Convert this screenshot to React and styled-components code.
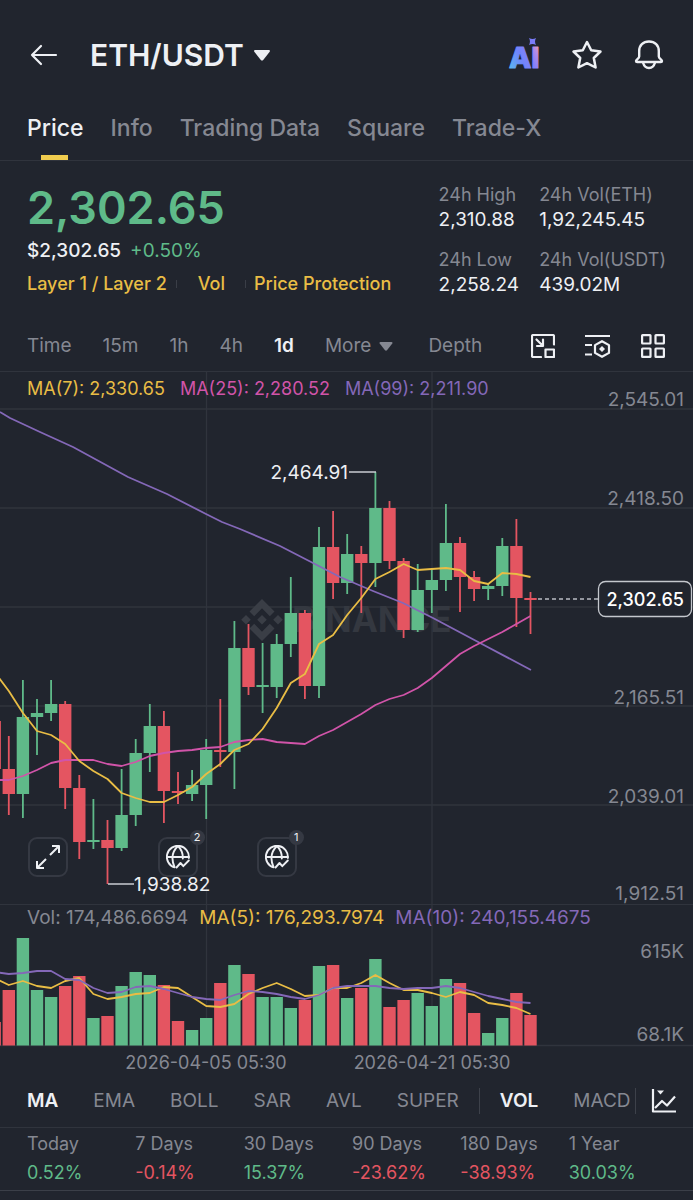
import React, { useState } from "react";
import styled, { createGlobalStyle } from "styled-components";

const GREEN = "#5fba89";
const RED = "#e45561";
const YELLOW = "#e9bd45";
const PINK = "#d154a9";
const PURPLE = "#8468b8";
const GREY = "#858892";
const LIGHT = "#eef0f4";
const LINE = "#30343d";
const BG = "#21252e";

const FONT = `Inter, "Liberation Sans", sans-serif`;

// body top, body bottom, wick top, wick bottom, up, volume top
const candles = [
    [721, 769, 715, 775, 0, 1022],
    [769, 794, 736, 815, 0, 990],
    [717, 794, 680, 818, 1, 938],
    [713, 717, 699, 755, 1, 990],
    [704, 713, 680, 721, 1, 997],
    [704, 788, 701, 809, 0, 986],
    [788, 842, 775, 859, 0, 976],
    [840, 842, 799, 849, 1, 1018],
    [840, 848, 820, 884, 0, 1016],
    [815, 848, 769, 851, 1, 986],
    [753, 815, 739, 826, 1, 972],
    [726, 753, 704, 772, 1, 975],
    [726, 791, 711, 823, 0, 985],
    [791, 793, 772, 804, 0, 1021],
    [785, 794, 770, 801, 1, 1030],
    [750, 785, 739, 819, 1, 1018],
    [750, 752, 699, 767, 0, 983],
    [648, 752, 621, 789, 1, 965],
    [648, 687, 624, 695, 0, 974],
    [685, 687, 643, 713, 1, 997],
    [644, 687, 634, 698, 1, 997],
    [613, 644, 577, 657, 1, 1008],
    [613, 686, 610, 699, 0, 1000],
    [547, 686, 527, 698, 1, 966],
    [547, 583, 511, 599, 0, 965],
    [554, 583, 534, 594, 1, 998],
    [554, 563, 546, 613, 0, 988],
    [508, 563, 472, 587, 1, 959],
    [508, 561, 501, 569, 0, 1007],
    [561, 630, 558, 638, 0, 1000],
    [590, 630, 564, 632, 1, 993],
    [580, 590, 569, 613, 1, 1006],
    [543, 580, 504, 591, 1, 979],
    [543, 577, 537, 612, 0, 983],
    [577, 589, 571, 601, 0, 1013],
    [586, 589, 583, 600, 1, 1033],
    [546, 586, 538, 596, 1, 1018],
    [546, 598, 519, 627, 0, 993],
    [598, 600, 592, 634, 0, 1015],
];

const ma7 = [672, 691, 713, 731, 735, 744, 761, 771, 779, 793, 798, 802, 802, 795, 787, 774, 764, 750, 744, 729, 708, 683, 674, 644, 635, 615, 598, 579, 572, 564, 570, 569, 568, 570, 581, 584, 573, 574, 577];
const ma25 = [780, 780, 776, 770, 763, 760, 760, 760, 764, 766, 762, 756, 753, 751, 750, 748, 747, 742, 740, 739, 742, 743, 744, 736, 730, 722, 714, 705, 699, 695, 688, 678, 666, 654, 646, 639, 632, 624, 616];
const ma99 = "0,412 10,418 40,432 73,447 128,477 167,494 206,514 222,522 240,529 280,546 313,563 340,577 373,591 403,603 433,618 480,643 531,670";
const volMa5 = [978, 985, 981, 986, 988, 981, 978, 994, 999, 997, 994, 993, 987, 988, 997, 1006, 1007, 1004, 994, 988, 983, 989, 996, 995, 988, 988, 983, 975, 983, 990, 990, 993, 997, 992, 995, 1003, 1005, 1008, 1014];
const volMa10 = [972, 974, 973, 971, 971, 979, 980, 988, 993, 992, 987, 986, 989, 993, 997, 999, 1000, 995, 991, 992, 994, 997, 999, 995, 988, 986, 986, 986, 988, 989, 988, 988, 986, 988, 992, 996, 999, 1002, 1003];

const xAt = (i) => 8.8 + (i - 1) * 14.1;
const toPoints = (list) => list.map((y, i) => `${xAt(i)},${y}`).join(" ");

const tabs = ["Price", "Info", "Trading Data", "Square", "Trade-X"];
const intervals = ["Time", "15m", "1h", "4h", "1d"];
const mainIndicators = ["MA", "EMA", "BOLL", "SAR", "AVL", "SUPER"];
const subIndicators = ["VOL", "MACD"];
const stats = [
    ["24h High", "2,310.88"],
    ["24h Vol(ETH)", "1,92,245.45"],
    ["24h Low", "2,258.24"],
    ["24h Vol(USDT)", "439.02M"],
];
const performance = [
    ["Today", "0.52%", true],
    ["7 Days", "-0.14%", false],
    ["30 Days", "15.37%", true],
    ["90 Days", "-23.62%", false],
    ["180 Days", "-38.93%", false],
    ["1 Year", "30.03%", true],
];
const priceAxis = [
    ["2,545.01", 399],
    ["2,418.50", 498],
    ["2,165.51", 697],
    ["2,039.01", 796],
    ["1,912.51", 893],
];

const GlobalStyle = createGlobalStyle`
    * {
        box-sizing: border-box;
    }
    body {
        margin: 0;
        background: ${BG};
        color: ${LIGHT};
        font-family: ${FONT};
    }
    button {
        margin: 0;
        padding: 0;
        border: 0;
        background: none;
        color: inherit;
        font: inherit;
        cursor: pointer;
    }
`;

const Page = styled.main`
    width: 100%;
    min-height: 100vh;
    overflow: hidden;
`;
const Header = styled.header`
    display: flex;
    align-items: center;
    padding: 35px 29px 0 28px;
    height: 75px;
`;
const IconButton = styled.button`
    display: flex;
    align-items: center;
    justify-content: center;
    flex: none;
    color: ${LIGHT};
`;
const Pair = styled.button`
    display: flex;
    align-items: center;
    gap: 10px;
    margin-left: 30px;
    color: ${LIGHT};
    font-size: 30px;
    line-height: 40px;
    font-weight: 600;
`;
const HeaderActions = styled.div`
    display: flex;
    align-items: center;
    gap: 30px;
    margin-left: auto;
`;
const Tabs = styled.nav`
    display: flex;
    gap: 27px;
    padding: 33px 27px 0;
    border-bottom: 1px solid ${LINE};
`;
const Tab = styled.button`
    position: relative;
    padding-bottom: 12px;
    color: ${(p) => (p.$active ? LIGHT : GREY)};
    font-size: 23px;
    line-height: 40px;
    font-weight: 500;
    white-space: nowrap;
    &::after {
        content: "";
        display: ${(p) => (p.$active ? "block" : "none")};
        position: absolute;
        left: 50%;
        bottom: 0;
        width: 27px;
        height: 5px;
        margin-left: -14px;
        background: #f0cc4e;
    }
`;
const Summary = styled.section`
    display: flex;
    justify-content: space-between;
    padding: 18px 27px 0;
`;
const LastPrice = styled.div`
    margin-bottom: 1px;
    color: ${GREEN};
    font-size: 45px;
    line-height: 57px;
    font-weight: 600;
`;
const SubPrice = styled.div`
    display: flex;
    gap: 9px;
    font-size: 19px;
    line-height: 28px;
    font-weight: 500;
`;
const Change = styled.span`
    color: ${GREEN};
    font-weight: 400;
`;
const Tags = styled.div`
    display: flex;
    align-items: center;
    padding-top: 5px;
    font-size: 18px;
    line-height: 28px;
    font-weight: 500;
`;
const Tag = styled.a`
    color: ${YELLOW};
    text-decoration: none;
    white-space: nowrap;
`;
const TagLine = styled.span`
    width: 1px;
    height: 8px;
    margin: 0 ${(p) => p.$after}px 0 ${(p) => p.$before}px;
    background: #3a3e47;
`;
const Stats = styled.dl`
    display: grid;
    grid-template-columns: auto auto;
    column-gap: 20px;
    row-gap: 14px;
    margin: 0;
    padding-top: 3px;
    font-size: 18px;
    line-height: 25px;
    white-space: nowrap;
    dt {
        color: ${GREY};
    }
    dd {
        margin: 0;
        font-size: 19px;
    }
`;
const Toolbar = styled.div`
    display: flex;
    align-items: center;
    margin: 27px 0 4px;
    padding: 0 28px 0 27px;
    height: 42px;
    font-size: 19px;
`;
const Intervals = styled.div`
    display: flex;
    gap: 31px;
`;
const Option = styled.button`
    display: flex;
    align-items: center;
    gap: 8px;
    color: ${(p) => (p.$active ? LIGHT : GREY)};
    font-weight: ${(p) => (p.$active ? 600 : 400)};
    line-height: 28px;
`;
const Depth = styled(Option)`
    margin-left: 35px;
`;
const Tools = styled.div`
    display: flex;
    gap: 30px;
    margin-left: auto;
`;
const Panel = styled.section`
    position: relative;
    border-top: 1px solid ${LINE};
    svg {
        display: block;
    }
`;
const Legend = styled.div`
    position: absolute;
    top: ${(p) => p.$top}px;
    left: 27px;
    display: flex;
    gap: ${(p) => p.$gap}px;
    font-size: ${(p) => p.$size}px;
    line-height: 24px;
    white-space: nowrap;
`;
const LegendItem = styled.span`
    color: ${(p) => p.$color};
`;
const Floating = styled.div`
    position: absolute;
    left: 4%;
    bottom: 27px;
    display: flex;
`;
const FloatButton = styled(IconButton)`
    position: relative;
    width: 40px;
    height: 40px;
    margin-right: ${(p) => p.$gap || 0}px;
    border: 2px solid #353943;
    border-radius: 9px;
    background: rgba(33, 37, 46, 0.8);
`;
const Badge = styled.span`
    position: absolute;
    top: -9px;
    right: -9px;
    width: 15px;
    height: 15px;
    border-radius: 8px;
    background: #353943;
    font-size: 11px;
    line-height: 15px;
    text-align: center;
`;
const Indicators = styled.div`
    display: flex;
    align-items: center;
    gap: 35px;
    height: 54px;
    padding: 0 16px 0 27px;
    border-bottom: 1px solid ${LINE};
    font-size: 19px;
    > :last-child {
        margin-left: auto;
    }
`;
const Divider = styled.span`
    flex: none;
    width: 1px;
    height: 26px;
    margin: 0 ${(p) => p.$pull}px;
    background: #3d414a;
`;
const Performance = styled.dl`
    display: grid;
    grid-template-columns: repeat(6, 1fr);
    margin: 0;
    padding: 1px 16px 3px 27px;
    border-bottom: 1px solid #3b3f48;
    font-size: 18px;
    line-height: 29px;
    white-space: nowrap;
    dt {
        color: ${GREY};
    }
`;
const Percent = styled.dd`
    margin: 0;
    color: ${(p) => (p.$up ? GREEN : RED)};
`;
const ChartText = styled.text`
    fill: ${(p) => p.$color || GREY};
    font-family: ${FONT};
    font-size: ${(p) => p.$size || 19}px;
    font-weight: ${(p) => p.$weight || 400};
    text-anchor: ${(p) => p.$anchor || "start"};
`;
const Watermark = styled.text`
    fill: #343840;
    font-family: ${FONT};
    font-size: 35px;
    font-weight: 700;
`;
const AiText = styled.text`
    font-family: ${FONT};
    font-size: 29px;
    font-weight: 800;
`;

const Icon = ({ w = 24, h = w, stroke = 2, round = "round", children }) => (
    <svg width={w} height={h} viewBox={`0 0 ${w} ${h}`} fill="none" stroke="currentColor" strokeWidth={stroke} strokeLinecap={round} strokeLinejoin="round" aria-hidden="true">
        {children}
    </svg>
);

const Caret = ({ w = 16, h = 11 }) => (
    <svg width={w} height={h} viewBox="0 0 16 11" fill="currentColor" aria-hidden="true">
        <path d="M1.2 0h13.6c1 0 1.5 1 .9 1.800L9.200 10c-.7.8-1.700.8-2.400 0L.3 1.800C-.3 1 .2 0 1.200 0z" />
    </svg>
);

const AiLogo = () => (
    <svg width="32" height="46" viewBox="-1 -6 32 46" overflow="visible" aria-label="AI">
        <defs>
            <linearGradient id="ai" gradientUnits="userSpaceOnUse" x1="0" y1="26" x2="32" y2="12">
                <stop offset="0" stopColor="#5cb4f0" />
                <stop offset="0.35" stopColor="#6f86fb" />
                <stop offset="0.65" stopColor="#8480fb" />
                <stop offset="0.85" stopColor="#b48be8" />
                <stop offset="1" stopColor="#f0a4a8" />
            </linearGradient>
        </defs>
        <AiText x="0" y="30" fill="url(#ai)" stroke="url(#ai)" strokeWidth="1" strokeLinejoin="round">AI</AiText>
        <path d="M20 0c2.500 1.400 4.500 1.400 7 0-1.300 2.500-1.300 4.500 0 7-2.500-1.300-4.500-1.300-7 0 1.300-2.500 1.300-4.500 0-7z" fill="#7a7cf8" />
    </svg>
);

const GlobeIcon = () => (
    <Icon w={24} stroke={1.9}>
        <path d="M8.500 22.300A11 11 0 1 1 22.800 13" />
        <path d="M1.200 12h21.600" />
        <path d="M12 1c-6.500 6-6.500 14-3.500 21M12 1c3.500 3.500 5 8 4.800 12.500" />
        <path d="M10.500 22.500l4-4.500 2.800 3.200 5.500-5.700" />
    </Icon>
);

const Candle = ({ data, x }) => {
    const [top, bottom, high, low, up] = data;
    const color = up ? GREEN : RED;
    return (
        <g fill={color}>
            <rect x={x - 0.9} y={high} width="1.8" height={low - high} />
            <rect x={x - 6.2} y={top} width="12.4" height={bottom - top} />
        </g>
    );
};

const PriceChart = () => (
    <svg width="100%" viewBox="0 372 693 532" role="img" aria-label="ETH/USDT daily candles">
        <path d="M0 409H693M0 508H693M0 607H693M0 706H693M0 805H693M206.500 372V904M432 372V904" stroke={LINE} strokeWidth="1.300" />
        <g fill="#3a3e46">
            <path d="M262 599l12.500 12.500-4.700 4.700-7.800-7.900-7.800 7.900-4.700-4.700zM262 641l12.500-12.500-4.700-4.700-7.800 7.900-7.800-7.900-4.700 4.700zM262 615l4.800 4.800-4.800 4.800-4.800-4.800zM246 615l4.800 4.800-4.800 4.800-4.800-4.800zM278 615l4.800 4.800-4.800 4.800-4.800-4.800z" />
        </g>
        <Watermark x="292" y="632">BINANCE</Watermark>
        {candles.map((c, i) => (
            <Candle key={i} data={c} x={xAt(i)} />
        ))}
        <g fill="none" strokeWidth="1.800" strokeLinejoin="round">
            <polyline points={ma99} stroke={PURPLE} />
            <polyline points={toPoints(ma25)} stroke={PINK} />
            <polyline points={toPoints(ma7)} stroke={YELLOW} />
        </g>
        <path d="M349 472H376M108 884H134" stroke="#c9ccd2" strokeWidth="1.300" />
        <ChartText x="348" y="479" $anchor="end" $color={LIGHT}>2,464.91</ChartText>
        <ChartText x="134" y="891" $color={LIGHT}>1,938.82</ChartText>
        {priceAxis.map(([label, y]) => (
            <ChartText key={label} x="684" y={y + 7} $anchor="end">{label}</ChartText>
        ))}
        <path d="M538 599H598" stroke="#b9bcc3" strokeWidth="1.300" strokeDasharray="4 3" />
        <rect x="598.500" y="581.500" width="93" height="35" rx="7" fill={BG} stroke="#c4c7cd" strokeWidth="1.300" />
        <ChartText x="684" y="606" $anchor="end" $color="#fff" $size={18} $weight={500}>2,302.65</ChartText>
    </svg>
);

const VolumeChart = () => (
    <svg width="100%" viewBox="0 905 693 169" role="img" aria-label="Volume">
        <path d="M206.500 905V1045M432 905V1045M0 1045.500H693" stroke={LINE} strokeWidth="1.300" />
        {candles.map((c, i) => (
            <rect key={i} x={xAt(i) - 6.2} y={c[5]} width="12.4" height={1045.5 - c[5]} fill={c[4] ? GREEN : RED} />
        ))}
        <g fill="none" strokeWidth="1.800" strokeLinejoin="round">
            <polyline points={toPoints(volMa5)} stroke={YELLOW} />
            <polyline points={toPoints(volMa10)} stroke={PURPLE} />
        </g>
        <ChartText x="684" y="958" $anchor="end">615K</ChartText>
        <ChartText x="684" y="1041" $anchor="end">68.1K</ChartText>
        <ChartText x="206" y="1069" $anchor="middle" $size={18}>2026-04-05 05:30</ChartText>
        <ChartText x="432" y="1069" $anchor="middle" $size={18}>2026-04-21 05:30</ChartText>
    </svg>
);

const App = () => {
    const [tab, setTab] = useState("Price");
    const [interval, setInterval] = useState("1d");

    return (
        <Page>
            <GlobalStyle />
            <Header>
                <IconButton aria-label="Back">
                    <Icon w={32} h={24} stroke={2.2}>
                        <path d="M28 12H4M13 3l-9 9 9 9" />
                    </Icon>
                </IconButton>
                <Pair>
                    ETH/USDT
                    <Caret />
                </Pair>
                <HeaderActions>
                    <IconButton aria-label="AI">
                        <AiLogo />
                    </IconButton>
                    <IconButton aria-label="Favorite">
                        <Icon w={34} h={32} stroke={2.5}>
                            <path d="M17 3l4.200 8.300 9.300 1.200-6.700 6.500 1.800 9.500L17 24.200 8.400 28.500l1.800-9.500L3.500 12.500l9.300-1.200z" />
                        </Icon>
                    </IconButton>
                    <IconButton aria-label="Alerts">
                        <Icon w={30} h={32} stroke={2.4}>
                            <path d="M15 2.500c-6 0-9.800 4-9.800 9.500v5.500c0 2-3.200 3-3.200 4.500 0 .8.500 1 1.200 1h23.600c.7 0 1.200-.2 1.200-1 0-1.500-3.200-2.500-3.200-4.500V12c0-5.500-3.800-9.500-9.800-9.500z" />
                            <path d="M9 23.500c1 3.700 3.200 5.500 6 5.500s5-1.800 6-5.500" />
                        </Icon>
                    </IconButton>
                </HeaderActions>
            </Header>

            <Tabs>
                {tabs.map((name) => (
                    <Tab key={name} $active={name === tab} onClick={() => setTab(name)}>{name}</Tab>
                ))}
            </Tabs>

            <Summary>
                <div>
                    <LastPrice>2,302.65</LastPrice>
                    <SubPrice>
                        <span>$2,302.65</span>
                        <Change>+0.50%</Change>
                    </SubPrice>
                    <Tags>
                        <Tag href="#layer">Layer 1 / Layer 2</Tag>
                        <TagLine $before={9} $after={21} />
                        <Tag href="#vol">Vol</Tag>
                        <TagLine $before={20} $after={8} />
                        <Tag href="#protection">Price Protection</Tag>
                    </Tags>
                </div>
                <Stats>
                    {stats.map(([label, value]) => (
                        <div key={label}>
                            <dt>{label}</dt>
                            <dd>{value}</dd>
                        </div>
                    ))}
                </Stats>
            </Summary>

            <Toolbar>
                <Intervals>
                    {intervals.map((name) => (
                        <Option key={name} $active={name === interval} onClick={() => setInterval(name)}>{name}</Option>
                    ))}
                    <Option>
                        More
                        <Caret w={14} h={9} />
                    </Option>
                </Intervals>
                <Depth>Depth</Depth>
                <Tools>
                    <IconButton aria-label="Floating window">
                        <Icon w={24} stroke={2.2}>
                            <path d="M23 10.500V2.200C23 1.500 22.500 1 21.800 1H2.200C1.500 1 1 1.500 1 2.200v19.600c0 .7.5 1.200 1.200 1.200H10" />
                            <path d="M5.500 5.500l6 6M12 5.500V12H6" />
                            <rect x="14.500" y="15.500" width="8.500" height="7.500" />
                        </Icon>
                    </IconButton>
                    <IconButton aria-label="Chart settings">
                        <Icon w={26} h={24} stroke={2.2} round="butt">
                            <path d="M0 2h25M0 11h7M0 20.500h7" />
                            <path d="M17 7.200l7 3.900v7.800l-7 3.900-7-3.900v-7.800z" />
                            <path d="M17 12l3 3-3 3-3-3z" fill="currentColor" stroke="none" />
                        </Icon>
                    </IconButton>
                    <IconButton aria-label="Layout">
                        <Icon w={24} stroke={2.2}>
                            <rect x="1.100" y="1.100" width="8.400" height="8.400" rx=".5" />
                            <rect x="14.500" y="1.100" width="8.400" height="8.400" rx=".5" />
                            <rect x="1.100" y="14.500" width="8.400" height="8.400" rx=".5" />
                            <rect x="14.500" y="14.500" width="8.400" height="8.400" rx=".5" />
                        </Icon>
                    </IconButton>
                </Tools>
            </Toolbar>

            <Panel>
                <PriceChart />
                <Legend $top={5} $gap={15} $size={18}>
                    <LegendItem $color={YELLOW}>MA(7): 2,330.65</LegendItem>
                    <LegendItem $color={PINK}>MA(25): 2,280.52</LegendItem>
                    <LegendItem $color={PURPLE}>MA(99): 2,211.90</LegendItem>
                </Legend>
                <Floating>
                    <FloatButton $gap={90} aria-label="Full screen">
                        <Icon w={26} stroke={2} round="butt">
                            <path d="M15 11l9-9M17 2h7v7M11 15l-9 9M2 17v7h7" />
                        </Icon>
                    </FloatButton>
                    <FloatButton $gap={59} aria-label="Events">
                        <GlobeIcon />
                        <Badge>2</Badge>
                    </FloatButton>
                    <FloatButton aria-label="Events">
                        <GlobeIcon />
                        <Badge>1</Badge>
                    </FloatButton>
                </Floating>
            </Panel>

            <Panel>
                <VolumeChart />
                <Legend $top={1} $gap={11} $size={19}>
                    <LegendItem $color={GREY}>Vol: 174,486.6694</LegendItem>
                    <LegendItem $color={YELLOW}>MA(5): 176,293.7974</LegendItem>
                    <LegendItem $color={PURPLE}>MA(10): 240,155.4675</LegendItem>
                </Legend>
            </Panel>

            <Indicators>
                {mainIndicators.map((name) => (
                    <Option key={name} $active={name === "MA"}>{name}</Option>
                ))}
                <Divider $pull={-15} />
                {subIndicators.map((name) => (
                    <Option key={name} $active={name === "VOL"}>{name}</Option>
                ))}
                <Divider $pull={-31} />
                <IconButton aria-label="Indicator settings">
                    <Icon w={26} h={26} stroke={2.2} round="butt">
                        <path d="M2 1v22.500h23" />
                        <path d="M4 20l7-7 5 4.500 8-9" />
                        <path d="M6 2.500h7L9.500 6.500z" fill="currentColor" stroke="none" />
                    </Icon>
                </IconButton>
            </Indicators>

            <Performance>
                {performance.map(([label, value, up]) => (
                    <div key={label}>
                        <dt>{label}</dt>
                        <Percent $up={up}>{value}</Percent>
                    </div>
                ))}
            </Performance>
        </Page>
    );
};

export default App;
